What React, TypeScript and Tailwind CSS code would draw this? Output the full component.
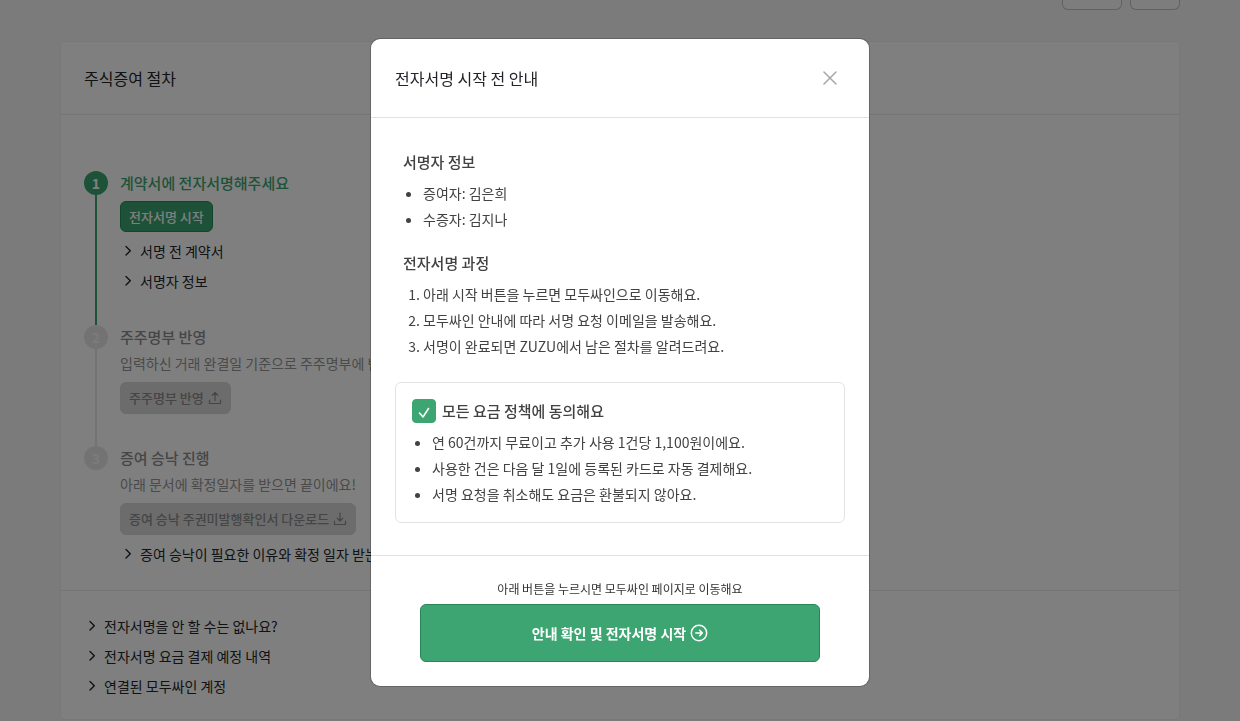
import { useState, type ReactNode } from "react";
import clsx from "clsx";

const FAQ_ITEMS = [
  "전자서명을 안 할 수는 없나요?",
  "전자서명 요금 결제 예정 내역",
  "연결된 모두싸인 계정",
];

const SIGNERS = ["증여자: 김은희", "수증자: 김지나"];

const PROCESS = [
  "아래 시작 버튼을 누르면 모두싸인으로 이동해요.",
  "모두싸인 안내에 따라 서명 요청 이메일을 발송해요.",
  "서명이 완료되면 ZUZU에서 남은 절차를 알려드려요.",
];

const PRICING = [
  "연 60건까지 무료이고 추가 사용 1건당 1,100원이에요.",
  "사용한 건은 다음 달 1일에 등록된 카드로 자동 결제해요.",
  "서명 요청을 취소해도 요금은 환불되지 않아요.",
];

export default function App() {
  const [isOpen, setIsOpen] = useState(true);

  return (
    <div className="min-h-screen bg-[#f7f7f7] font-['Noto_Sans_CJK_KR','Noto_Sans',sans-serif] text-[#212529]">
      <ProcedurePage onStart={() => setIsOpen(true)} />
      {isOpen && <SignGuideModal onClose={() => setIsOpen(false)} />}
    </div>
  );
}

function ProcedurePage({ onStart }: { onStart: () => void }) {
  return (
    <main className="px-[60px]">
      <div className="flex justify-end gap-2">
        <button
          type="button"
          aria-label="이전"
          className="h-[10px] w-[60px] rounded-b-md border border-t-0 border-[#c4c4c4] bg-[#fbfbfd]"
        />
        <button
          type="button"
          aria-label="다음"
          className="h-[10px] w-[50px] rounded-b-md border border-t-0 border-[#c4c4c4] bg-[#fbfbfd]"
        />
      </div>

      <section className="mt-[31px] overflow-hidden rounded border border-[#f0f0f0] bg-white">
        <h1 className="-ml-px border-b border-[#eaeaea] p-6 text-base leading-6">
          주식증여 절차
        </h1>

        <ol className="-ml-px px-6 pt-14 pb-[21px]">
          <Step number={1} title="계약서에 전자서명해주세요" active>
            <button
              type="button"
              onClick={onStart}
              className="mt-1.5 block rounded-md border border-[#268a56] bg-[#3ca571] px-2 text-[13px] leading-[29px] font-medium text-white"
            >
              전자서명 시작
            </button>
            <div className="mt-1 pb-[29px]">
              <Disclosure label="서명 전 계약서" />
              <Disclosure label="서명자 정보" />
            </div>
          </Step>

          <Step number={2} title="주주명부 반영">
            <p className="mt-1 text-sm leading-5 text-[#949494]">
              입력하신 거래 완결일 기준으로 주주명부에 반영해요.
            </p>
            <DisabledButton label="주주명부 반영" icon={<UploadIcon />} />
            <div className="h-8" />
          </Step>

          <Step number={3} title="증여 승낙 진행" last>
            <p className="mt-1 text-sm leading-5 text-[#949494]">
              아래 문서에 확정일자를 받으면 끝이에요!
            </p>
            <DisabledButton
              label="증여 승낙 주권미발행확인서 다운로드"
              icon={<DownloadIcon />}
            />
            <div className="mt-1">
              <Disclosure label="증여 승낙이 필요한 이유와 확정 일자 받는 방법" />
            </div>
          </Step>
        </ol>

        <div className="-ml-px border-t border-[#eaeaea] px-6 pt-5 pb-[18px]">
          {FAQ_ITEMS.map((item) => (
            <Disclosure key={item} label={item} />
          ))}
        </div>
      </section>
    </main>
  );
}

type StepProps = {
  number: number;
  title: string;
  active?: boolean;
  last?: boolean;
  children: ReactNode;
};

function Step({ number, title, active, last, children }: StepProps) {
  return (
    <li className="flex gap-3">
      <div className="flex w-6 shrink-0 flex-col items-center">
        <span
          className={clsx(
            "flex size-6 items-center justify-center rounded-full text-sm font-bold",
            active ? "bg-[#3ca571] text-white" : "bg-[#e6e6e6] text-[#f7f7f7]",
          )}
        >
          {number}
        </span>
        {!last && (
          <span
            className={clsx("w-0.5 flex-1", active ? "bg-[#3ca571]" : "bg-[#e6e6e6]")}
          />
        )}
      </div>
      <div className="min-w-0 flex-1">
        <h2
          className={clsx(
            "text-[15px] leading-6 font-medium",
            active ? "text-[#3ca571]" : "text-[#8c8c8c]",
          )}
        >
          {title}
        </h2>
        {children}
      </div>
    </li>
  );
}

function Disclosure({ label }: { label: string }) {
  return (
    <details>
      <summary className="flex h-[30px] cursor-pointer list-none items-center gap-1 text-sm">
        <svg viewBox="0 0 16 16" className="size-4" fill="none" stroke="currentColor" strokeWidth="1.4">
          <path d="M6 3.5 10.3 7.7 6 12" strokeLinecap="round" strokeLinejoin="round" />
        </svg>
        {label}
      </summary>
    </details>
  );
}

function DisabledButton({ label, icon }: { label: string; icon: ReactNode }) {
  return (
    <button
      type="button"
      disabled
      className="mt-[9px] flex h-8 items-center gap-1 rounded-md border border-[#d6d6d6] bg-[#d9d9d9] px-2 text-[13px] font-medium text-[#8a8a8a]"
    >
      {label}
      {icon}
    </button>
  );
}

function SignGuideModal({ onClose }: { onClose: () => void }) {
  const [agreed, setAgreed] = useState(true);

  return (
    <div className="fixed inset-0 flex items-start justify-center overflow-auto bg-black/50 pt-[38px]">
      <div
        role="dialog"
        aria-modal="true"
        aria-labelledby="sign-guide-title"
        className="w-full max-w-[500px] rounded-[10px] border border-black/20 bg-white bg-clip-padding"
      >
        <div className="flex items-center justify-between border-b border-[#dee2e6] px-6 py-[27px]">
          <h2 id="sign-guide-title" className="text-base leading-6">
            전자서명 시작 전 안내
          </h2>
          <button type="button" aria-label="닫기" onClick={onClose} className="px-2 text-[#a6a6a6]">
            <svg viewBox="0 0 14 14" className="size-3.5" fill="none" stroke="currentColor" strokeWidth="1.5">
              <path d="M1 1l12 12M13 1 1 13" strokeLinecap="round" />
            </svg>
          </button>
        </div>

        <div className="px-6 py-8 text-sm leading-[26px] text-[#424242]">
          <div className="px-2">
            <h3 className="mb-1.5 text-[15px] leading-6 font-medium">서명자 정보</h3>
            <ul className="list-disc pl-5">
              {SIGNERS.map((signer) => (
                <li key={signer}>{signer}</li>
              ))}
            </ul>
            <h3 className="mt-[19px] mb-1.5 text-[15px] leading-6 font-medium">전자서명 과정</h3>
            <ol className="list-decimal pl-5">
              {PROCESS.map((line) => (
                <li key={line}>{line}</li>
              ))}
            </ol>
          </div>

          <div className="mt-[23px] rounded-md border border-[#e3e3e3] px-4 pt-4 pb-[15px]">
            <label className="mb-1.5 flex items-center gap-1.5 text-[15px] leading-6 font-medium">
              <span className="grid size-6">
                <input
                  type="checkbox"
                  checked={agreed}
                  onChange={(event) => setAgreed(event.target.checked)}
                  className="peer col-start-1 row-start-1 size-6 appearance-none rounded border border-[#3ca571] bg-white checked:bg-[#3ca571]"
                />
                <svg
                  viewBox="0 0 24 24"
                  className="pointer-events-none invisible col-start-1 row-start-1 size-6 peer-checked:visible"
                  fill="none"
                  stroke="white"
                  strokeWidth="1.6"
                >
                  <path d="m7.5 14 3.5 4L16.5 9.5" strokeLinecap="round" strokeLinejoin="round" />
                </svg>
              </span>
              모든 요금 정책에 동의해요
            </label>
            <ul className="list-disc pl-5">
              {PRICING.map((line) => (
                <li key={line}>{line}</li>
              ))}
            </ul>
          </div>
        </div>

        <div className="flex flex-col items-center border-t border-[#dee2e6] px-12 py-6">
          <p className="mb-1.5 text-xs leading-[18px] text-[#333]">
            아래 버튼을 누르시면 모두싸인 페이지로 이동해요
          </p>
          <button
            type="button"
            disabled={!agreed}
            className="flex h-[58px] w-full max-w-[400px] items-center justify-center gap-1 rounded-md border border-[#2a8657] bg-[#3ca571] text-sm font-bold text-white"
          >
            안내 확인 및 전자서명 시작
            <ArrowCircleIcon />
          </button>
        </div>
      </div>
    </div>
  );
}

function UploadIcon() {
  return (
    <svg viewBox="0 0 14 14" className="size-3.5" fill="none" stroke="currentColor" strokeWidth="1.2">
      <path d="M7 9.5V1.5M4.2 4.3 7 1.5l2.8 2.8M1.5 9v3.5h11V9" strokeLinecap="round" strokeLinejoin="round" />
    </svg>
  );
}

function DownloadIcon() {
  return (
    <svg viewBox="0 0 14 14" className="size-3.5" fill="none" stroke="currentColor" strokeWidth="1.2">
      <path d="M7 1v8M4.2 6.2 7 9l2.8-2.8M1.5 9v3.5h11V9" strokeLinecap="round" strokeLinejoin="round" />
    </svg>
  );
}

function ArrowCircleIcon() {
  return (
    <svg viewBox="0 0 18 18" className="size-[18px]" fill="none" stroke="currentColor" strokeWidth="1.5">
      <circle cx="9" cy="9" r="7.7" />
      <path d="M5.8 9h6.4M9.6 6.2 12.4 9l-2.8 2.8" strokeLinecap="round" strokeLinejoin="round" />
    </svg>
  );
}
